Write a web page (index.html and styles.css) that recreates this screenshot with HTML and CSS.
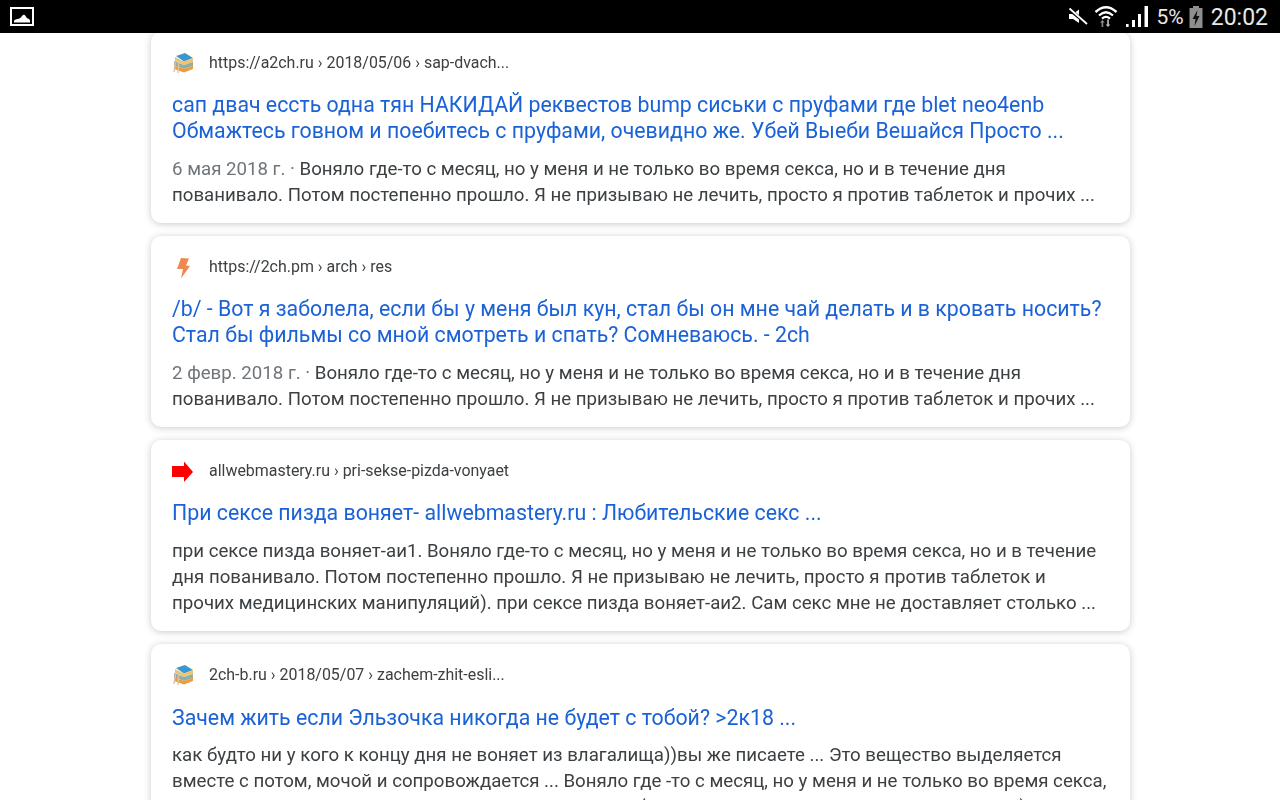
FILE: index.html
```html
<!DOCTYPE html>
<html lang="ru">
<head>
<meta charset="utf-8">
<title>Результаты поиска</title>
<link rel="stylesheet" href="styles.css">
</head>
<body>
<header class="status">
  <svg class="ic-image" width="24" height="20" viewBox="0 0 24 20"><rect x="1" y="1" width="22" height="17" fill="none" stroke="#fff" stroke-width="2"/><path d="M4 15.5 L4 13.5 Q6 11.5 8 12 Q10 12 12 9 Q14 6.5 15.5 9 Q17 11.5 18 11.5 Q19.5 12 20 13.5 L20 15.5 Z" fill="#fff"/></svg>
  <div class="status-right">
    <svg width="20" height="20" viewBox="0 0 20 20"><path d="M1 7 H5 L11 2.5 V16 L5 12 H1 Z" fill="#fff"/><path d="M1 2 L19 17" stroke="#000" stroke-width="3.4"/><path d="M1.5 1.5 L19 17" stroke="#fff" stroke-width="1.8"/></svg>
    <svg class="ic-wifi" width="24" height="24" viewBox="0 0 24 24"><path d="M1.5 8 Q12 -1.5 22.5 8" fill="none" stroke="#fff" stroke-width="2.4"/><path d="M5 11.5 Q12 5 19 11.5" fill="none" stroke="#fff" stroke-width="2.2"/><path d="M8 14.6 Q12 11 16 14.6" fill="none" stroke="#fff" stroke-width="2.2"/><path d="M8.4 16 L6 18.6 H7.6 V23 H9.2 V18.6 H10.8 Z" fill="#8b8b8b"/><path d="M14 23 L16.4 20.4 H14.9 V15.5 H13.2 V20.4 H11.6 Z" fill="#bbb"/></svg>
    <svg class="ic-signal" width="24" height="22" viewBox="0 0 24 22"><path d="M1 22 V19 H3.6 V22 Z M7 22 V15 H10 V22 Z M13 22 V9 H16 V22 Z M19.5 22 V1 H23 V22 Z" fill="#fff"/></svg>
    <span class="pct">5%</span>
    <svg class="ic-batt" width="14" height="22" viewBox="0 0 14 22"><rect x="4" y="0" width="6" height="2" fill="#8e8e8e"/><rect x="0.5" y="2" width="13" height="20" fill="#8e8e8e"/><path d="M8.5 4 L3.5 13 H6.5 L5.5 20 L10.5 10 H7.5 Z" fill="#111"/></svg>
    <span class="time">20:02</span>
  </div>
</header>

<main class="results">
  <article class="card">
    <div class="source">
      <svg class="fav" width="22" height="22" viewBox="0 0 22 22"><path d="M4 4 L13 1 L21 6 L12 9.5 Z" fill="#3d97cf"/><path d="M3 5 L12 9.5 L21 6 V10 L12 13 L3 9 Z" fill="#f2c36f"/><path d="M2 9 L12 13 L21 10 V14 L12 17 L2 13 Z" fill="#8fb0a0"/><path d="M2 13 L12 17 L21 14 V17 L12 20.5 L2 17 Z" fill="#f09a3a"/><path d="M4 6 L2 20 M7 8 L6 21" stroke="#d9c3a8" stroke-width="1.4" fill="none"/></svg>
      <span class="url">https://a2ch.ru › 2018/05/06 › sap-dvach...</span>
    </div>
    <h3 class="title">сап двач eccть одна тян НАКИДАЙ реквестов bump сиськи с пруфами где blet neo4enb Обмажтесь говном и поебитесь с пруфами, очевидно же. Убей Выеби Вешайся Просто ...</h3>
    <p class="snippet"><span class="date">6 мая 2018 г. · </span>Воняло где-то с месяц, но у меня и не только во время секса, но и в течение дня пованивало. Потом постепенно прошло. Я не призываю не лечить, просто я против таблеток и прочих ...</p>
  </article>
  <article class="card">
    <div class="source">
      <svg class="fav" width="22" height="22" viewBox="0 0 22 22"><path d="M9 2 L17 2.5 L14 9.5 L18 10 L9 22.5 L11 13 L5 13 Z" fill="#f0894f"/></svg>
      <span class="url">https://2ch.pm › arch › res</span>
    </div>
    <h3 class="title">/b/ - Вот я заболела, если бы у меня был кун, стал бы он мне чай делать и в кровать носить? Стал бы фильмы со мной смотреть и спать? Сомневаюсь. - 2ch</h3>
    <p class="snippet"><span class="date">2 февр. 2018 г. · </span>Воняло где-то с месяц, но у меня и не только во время секса, но и в течение дня пованивало. Потом постепенно прошло. Я не призываю не лечить, просто я против таблеток и прочих ...</p>
  </article>
  <article class="card">
    <div class="source">
      <svg class="fav" width="22" height="22" viewBox="0 0 22 22"><path d="M0 6 H12 V1.5 L21 12 L12 22 V17 H0 Z" fill="#fe0000"/></svg>
      <span class="url">allwebmastery.ru › pri-sekse-pizda-vonyaet</span>
    </div>
    <h3 class="title">При сексе пизда воняет- allwebmastery.ru : Любительские секс ...</h3>
    <p class="snippet">при сексе пизда воняет-аи1. Воняло где-то с месяц, но у меня и не только во время секса, но и в течение дня пованивало. Потом постепенно прошло. Я не призываю не лечить, просто я против таблеток и прочих медицинских манипуляций). при сексе пизда воняет-аи2. Сам секс мне не доставляет столько ...</p>
  </article>
  <article class="card card-last">
    <div class="source">
      <svg class="fav" width="22" height="22" viewBox="0 0 22 22"><path d="M4 4 L13 1 L21 6 L12 9.5 Z" fill="#3d97cf"/><path d="M3 5 L12 9.5 L21 6 V10 L12 13 L3 9 Z" fill="#f2c36f"/><path d="M2 9 L12 13 L21 10 V14 L12 17 L2 13 Z" fill="#8fb0a0"/><path d="M2 13 L12 17 L21 14 V17 L12 20.5 L2 17 Z" fill="#f09a3a"/><path d="M4 6 L2 20 M7 8 L6 21" stroke="#d9c3a8" stroke-width="1.4" fill="none"/></svg>
      <span class="url">2ch-b.ru › 2018/05/07 › zachem-zhit-esli...</span>
    </div>
    <h3 class="title">Зачем жить если Эльзочка никогда не будет с тобой? &gt;2к18 ...</h3>
    <p class="snippet">как будто ни у кого к концу дня не воняет из влагалища))вы же писаете ... Это вещество выделяется вместе с потом, мочой и сопровождается ... Воняло где -то с месяц, но у меня и не только во время секса, но и в течение дня пованивало. И потом постепенно (я не призываю не лечить, просто я против) ...</p>
  </article>
</main>
</body>
</html>
```
FILE: styles.css
```css
* { box-sizing: border-box; }
html, body { margin: 0; height: 800px; overflow: hidden; background: #fff; }
body { font-family: Roboto, "Noto Sans", sans-serif; color: #3c4043; }

.status {
  position: relative;
  z-index: 2;
  height: 33px;
  background: #000;
  display: flex;
  align-items: center;
  justify-content: space-between;
  padding: 0 12px 0 10px;
  color: #e8e8e8;
}
.status svg { display: block; flex: none; }
.status-right { display: flex; align-items: center; }
.ic-wifi { margin-left: 6px; margin-bottom: 2px; }
.ic-signal { margin-left: 7px; margin-bottom: 1px; }
.pct { font-size: 21px; margin-left: 8px; margin-top: 1px; }
.ic-batt { margin-left: 5px; }
.time { font-size: 23px; margin-left: 8px; margin-top: 1px; }

.results {
  width: 979px;
  margin: -1px 0 0 151px;
  display: flex;
  flex-direction: column;
  gap: 13px;
  filter: blur(0.25px);
}
.card {
  flex: none;
  height: 191px;
  padding: 19px 21px 0;
  background: #fff;
  border-radius: 10px;
  box-shadow: 0 1px 7px rgba(60, 64, 67, 0.28);
}
.source { display: flex; align-items: center; height: 22px; }
.fav { flex: none; margin-right: 15px; margin-top: 2px; }
.url { font-size: 15.95px; color: #3c4043; white-space: nowrap; }
.title {
  margin: 19px 0 0;
  font-size: 21.32px;
  line-height: 26px;
  font-weight: 400;
  color: #1a62d6;
}
.snippet {
  margin: 12px 0 0;
  font-size: 18.68px;
  line-height: 26px;
  color: #3c4043;
}
.date { color: #70757a; }
.card-last .title { margin-top: 20px; }
.card-last .snippet { margin-top: 11px; }
```
